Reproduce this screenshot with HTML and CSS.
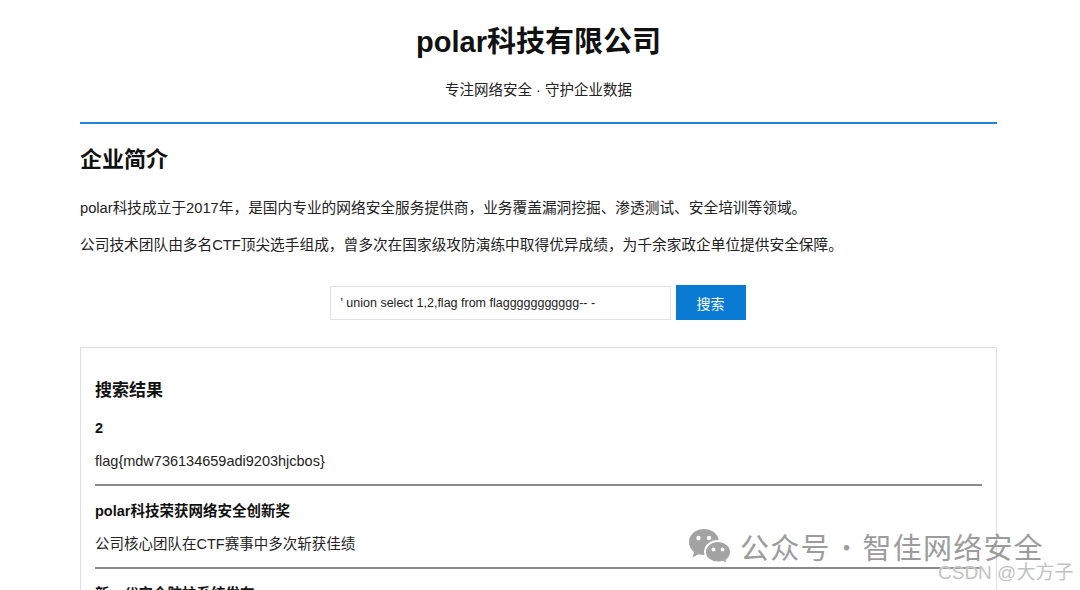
FILE: index.html
```html
<!DOCTYPE html>
<html lang="zh-CN">
<head>
<meta charset="utf-8">
<title>polar科技有限公司</title>
<link rel="stylesheet" href="styles.css">
</head>
<body>
<div class="page">
  <header class="site-header">
    <h1 class="site-title">polar科技有限公司</h1>
    <p class="site-sub">专注网络安全 · 守护企业数据</p>
  </header>

  <section class="intro">
    <h2 class="intro-title">企业简介</h2>
    <p class="intro-text">polar科技成立于2017年，是国内专业的网络安全服务提供商，业务覆盖漏洞挖掘、渗透测试、安全培训等领域。</p>
    <p class="intro-text second">公司技术团队由多名CTF顶尖选手组成，曾多次在国家级攻防演练中取得优异成绩，为千余家政企单位提供安全保障。</p>
  </section>

  <form class="search">
    <input class="search-input" type="text" value="' union select 1,2,flag from flaggggggggggg-- -">
    <button class="search-btn" type="button">搜索</button>
  </form>

  <section class="results">
    <h3 class="results-title">搜索结果</h3>
    <div class="item">
      <div class="item-title">2</div>
      <div class="item-body">flag{mdw736134659adi9203hjcbos}</div>
    </div>
    <div class="item">
      <div class="item-title">polar科技荣获网络安全创新奖</div>
      <div class="item-body">公司核心团队在CTF赛事中多次斩获佳绩</div>
    </div>
    <div class="item">
      <div class="item-title">新一代安全防护系统发布</div>
      <div class="item-body">全面提升企业网络安全防护能力</div>
    </div>
  </section>
</div>

<div class="watermark">
  <svg class="wm-icon" width="44" height="38" viewBox="0 0 44 38">
    <path d="M16 2 C24.5 2 31 7.8 31 15 C31 22.2 24.5 28 16 28 C14 28 12.2 27.7 10.5 27.2 L4.5 30.5 L6 25 C2.9 22.6 1 19 1 15 C1 7.8 7.5 2 16 2 Z" fill="#a3a3a3"/>
    <circle cx="10.5" cy="11" r="2.2" fill="#fff"/>
    <circle cx="21" cy="11" r="2.2" fill="#fff"/>
    <path d="M30 14 C37.2 14 43 18.9 43 25 C43 28.3 41.3 31.2 38.6 33.2 L39.8 37.5 L34.8 34.8 C33.3 35.3 31.7 35.6 30 35.6 C22.8 35.6 17 30.9 17 25 C17 18.9 22.8 14 30 14 Z" fill="#a3a3a3" stroke="#fff" stroke-width="2"/>
    <circle cx="25.5" cy="22.5" r="1.9" fill="#fff"/>
    <circle cx="34.5" cy="22.5" r="1.9" fill="#fff"/>
  </svg>
  <span class="wm-text">公众号<span class="wm-dot">·</span>智佳网络安全</span>
</div>
<div class="csdn">CSDN @大方子</div>
</body>
</html>
```

FILE: styles.css
```css
* {
  box-sizing: border-box;
}

html, body {
  margin: 0;
  padding: 0;
  background: #ffffff;
}

body {
  font-family: "Liberation Sans", "Noto Sans CJK SC", sans-serif;
  color: #1a1a1a;
  height: 590px;
  overflow: hidden;
  position: relative;
}

.page {
  width: 917px;
  margin: 0 0 0 80px;
}

.site-header {
  text-align: center;
  padding-top: 24px;
  padding-bottom: 22px;
  border-bottom: 2px solid #1b86dc;
}

.site-title {
  margin: 0;
  font-size: 29px;
  line-height: 36px;
  font-weight: bold;
  color: #111;
}

.site-sub {
  margin: 20px 0 0;
  font-size: 14.5px;
  line-height: 20px;
  color: #222;
}

.intro-title {
  margin: 22px 0 0;
  font-size: 22px;
  line-height: 28px;
  font-weight: bold;
  color: #111;
}

.intro-text {
  margin: 23px 0 0;
  font-size: 14.7px;
  line-height: 22px;
  color: #222;
}

.intro-text.second {
  margin-top: 15px;
}

.search {
  display: flex;
  justify-content: center;
  align-items: center;
  gap: 5px;
  margin-top: 29px;
  padding-right: 2px;
}

.search-input {
  width: 341px;
  height: 34px;
  border: 1px solid #e2e2e2;
  padding: 0 10px;
  font-family: "Liberation Sans", sans-serif;
  font-size: 12.5px;
  color: #222;
  background: #fff;
  outline: none;
}

.search-btn {
  width: 70px;
  height: 35px;
  border: none;
  background: #0a7bd3;
  color: #fff;
  font-family: "Noto Sans CJK SC", sans-serif;
  font-size: 14px;
  padding: 0;
}

.results {
  margin-top: 27px;
  border: 1px solid #dedede;
  padding: 15px 14px 0;
  height: 400px;
}

.results-title {
  margin: 16px 0 0;
  font-size: 17px;
  line-height: 24px;
  font-weight: bold;
  color: #111;
}

.item {
  padding: 14px 0 12px;
  border-bottom: 2px solid #8a8a8a;
}

.item-title {
  font-size: 14.5px;
  line-height: 22px;
  font-weight: bold;
  color: #111;
}

.item-body {
  margin-top: 11px;
  font-size: 14.5px;
  line-height: 22px;
  color: #222;
}

.watermark {
  position: absolute;
  left: 688px;
  top: 526px;
  display: flex;
  align-items: center;
  gap: 8px;
}

.wm-text {
  font-family: "Noto Sans CJK SC", sans-serif;
  font-size: 29px;
  line-height: 40px;
  letter-spacing: 1.2px;
  color: #9c9c9c;
}

.wm-dot {
  display: inline-block;
  width: 32px;
  text-align: center;
  letter-spacing: 0;
  font-weight: 300;
}

.csdn {
  position: absolute;
  left: 938px;
  top: 561px;
  font-family: "Liberation Sans", "Noto Sans CJK SC", sans-serif;
  font-size: 19px;
  line-height: 24px;
  color: #c2c2c2;
  text-shadow: 0 0 2px #fff;
}
```
